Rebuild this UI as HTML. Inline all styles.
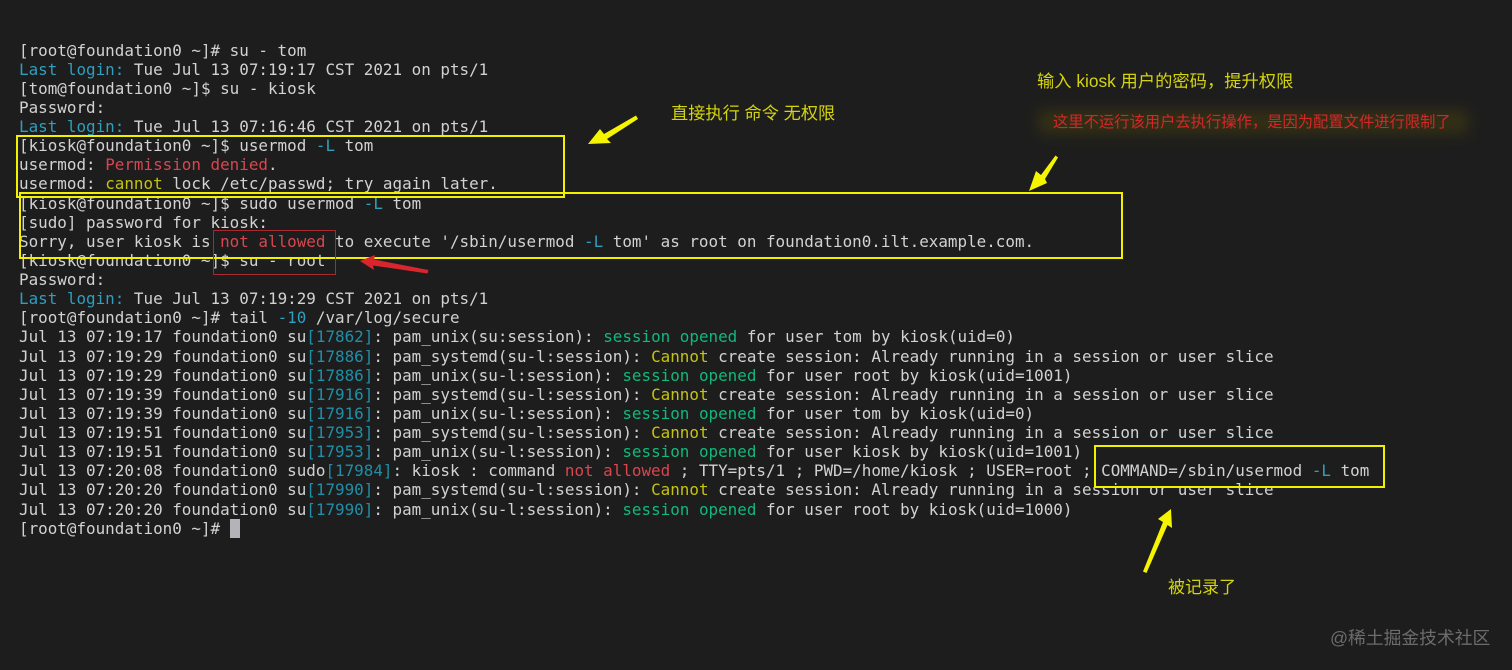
<!DOCTYPE html>
<html>
<head>
<meta charset="utf-8">
<style>
html,body{margin:0;padding:0;width:1512px;height:670px;overflow:hidden;background:#1d1d1d}
#t{position:absolute;left:19px;top:40.5px;margin:0;font:15.91px/19.12px "DejaVu Sans Mono",monospace;color:#d2d2d2;white-space:pre;filter:blur(.35px)}
.b{color:#2e9fbf}
.c{color:#1f8fa8}
.r{color:#d9464f}
.y{color:#c4c410}
.g{color:#12b87c}
.box{position:absolute;box-sizing:border-box}
.n{position:absolute;white-space:nowrap;font-family:"Liberation Sans","Noto Sans CJK SC",sans-serif;line-height:24px}
</style>
</head>
<body>
<pre id="t">[root@foundation0 ~]# su - tom
<span class="b">Last login:</span> Tue Jul 13 07:19:17 CST 2021 on pts/1
[tom@foundation0 ~]$ su - kiosk
Password:
<span class="b">Last login:</span> Tue Jul 13 07:16:46 CST 2021 on pts/1
[kiosk@foundation0 ~]$ usermod <span class="b">-L</span> tom
usermod: <span class="r">Permission denied</span>.
usermod: <span class="y">cannot</span> lock /etc/passwd; try again later.
[kiosk@foundation0 ~]$ sudo usermod <span class="b">-L</span> tom
[sudo] password for kiosk:
Sorry, user kiosk is <span class="r">not allowed</span> to execute '/sbin/usermod <span class="b">-L</span> tom' as root on foundation0.ilt.example.com.
[kiosk@foundation0 ~]$ su - root
Password:
<span class="b">Last login:</span> Tue Jul 13 07:19:29 CST 2021 on pts/1
[root@foundation0 ~]# tail <span class="b">-10</span> /var/log/secure
Jul 13 07:19:17 foundation0 su<span class="c">[17862]</span>: pam_unix(su:session): <span class="g">session opened</span> for user tom by kiosk(uid=0)
Jul 13 07:19:29 foundation0 su<span class="c">[17886]</span>: pam_systemd(su-l:session): <span class="y">Cannot</span> create session: Already running in a session or user slice
Jul 13 07:19:29 foundation0 su<span class="c">[17886]</span>: pam_unix(su-l:session): <span class="g">session opened</span> for user root by kiosk(uid=1001)
Jul 13 07:19:39 foundation0 su<span class="c">[17916]</span>: pam_systemd(su-l:session): <span class="y">Cannot</span> create session: Already running in a session or user slice
Jul 13 07:19:39 foundation0 su<span class="c">[17916]</span>: pam_unix(su-l:session): <span class="g">session opened</span> for user tom by kiosk(uid=0)
Jul 13 07:19:51 foundation0 su<span class="c">[17953]</span>: pam_systemd(su-l:session): <span class="y">Cannot</span> create session: Already running in a session or user slice
Jul 13 07:19:51 foundation0 su<span class="c">[17953]</span>: pam_unix(su-l:session): <span class="g">session opened</span> for user kiosk by kiosk(uid=1001)
Jul 13 07:20:08 foundation0 sudo<span class="c">[17984]</span>: kiosk : command <span class="r">not allowed</span> ; TTY=pts/1 ; PWD=/home/kiosk ; USER=root ; COMMAND=/sbin/usermod <span class="b">-L</span> tom
Jul 13 07:20:20 foundation0 su<span class="c">[17990]</span>: pam_systemd(su-l:session): <span class="y">Cannot</span> create session: Already running in a session or user slice
Jul 13 07:20:20 foundation0 su<span class="c">[17990]</span>: pam_unix(su-l:session): <span class="g">session opened</span> for user root by kiosk(uid=1000)
[root@foundation0 ~]#</pre>
<div class="box" style="left:230px;top:519px;width:10px;height:19px;background:#b4b4b8"></div>

<div class="box" style="left:16px;top:135px;width:549px;height:63px;border:2px solid #f0f000"></div>
<div class="box" style="left:19px;top:192px;width:1104px;height:67px;border:2px solid #f0f000"></div>
<div class="box" style="left:1094px;top:445px;width:291px;height:43px;border:2px solid #f0f000"></div>
<div class="box" style="left:213px;top:230px;width:123px;height:45px;border:1px solid #a82a30"></div>

<svg style="position:absolute;left:0;top:0" width="1512" height="670" viewBox="0 0 1512 670">
  <g fill="#f5f500">
    <polygon points="588,144 600,129 604,134 636,115.5 638,119 607,139 611,143"/>
    <polygon points="1029,191 1036,171 1041,175 1055.5,155.5 1058,157.5 1045,179 1047,183"/>
    <polygon points="1171,509 1172,528 1167.5,525 1146.5,573 1143,571.5 1163,522 1158,519"/>
  </g>
  <polygon fill="#d8262c" points="360,261 375,255 374,259.5 428.5,270 427.5,273.5 373,265.5 374,270"/>
</svg>

<div class="n" style="left:671px;top:101px;font-size:17.2px;color:#d4d40e">直接执行 命令 无权限</div>
<div class="n" style="left:1037px;top:69px;font-size:17.3px;color:#d4d40e">输入 kiosk 用户的密码，提升权限</div>
<div class="box" style="left:1038px;top:110px;width:430px;height:24px;background:#3e3812;filter:blur(7px);opacity:.7"></div>
<div class="n" style="left:1053px;top:111px;font-size:15.3px;color:#d42828">这里不运行该用户去执行操作，是因为配置文件进行限制了</div>
<div class="n" style="left:1168px;top:576px;font-size:17px;color:#d4d40e">被记录了</div>
<div class="n" style="left:1330px;top:626px;font-size:17.8px;color:#6c6c6c">@稀土掘金技术社区</div>
</body>
</html>
